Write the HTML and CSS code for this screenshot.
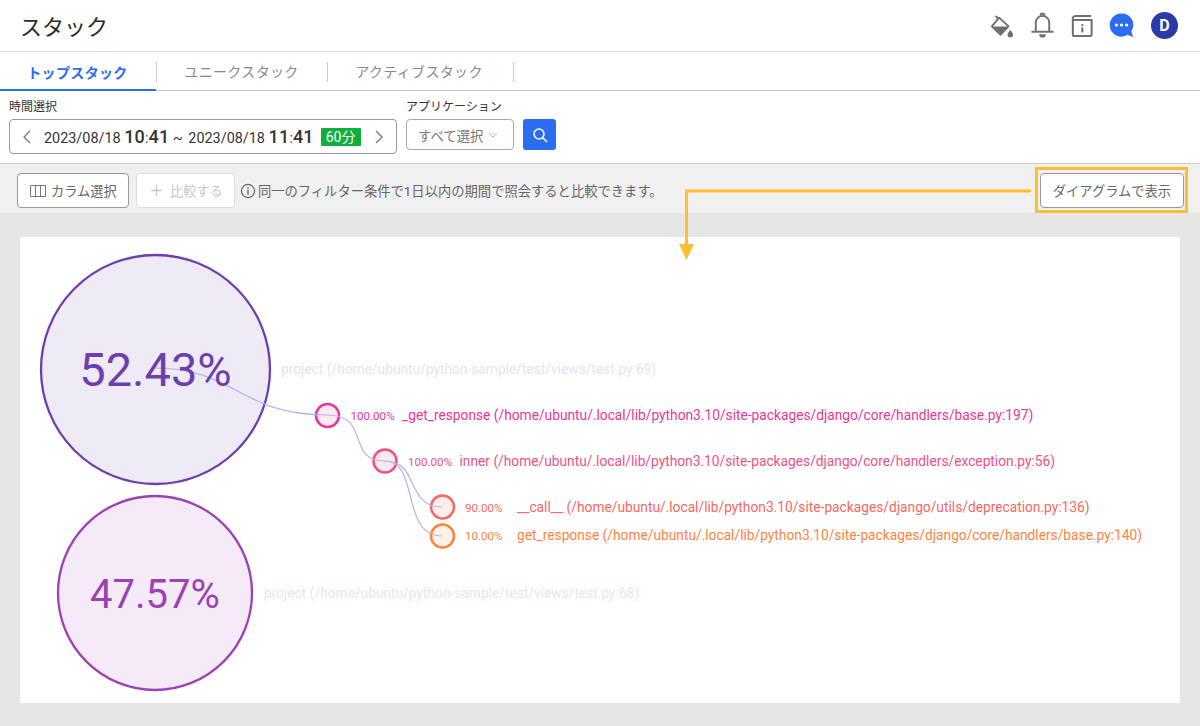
FILE: index.html
```html
<!DOCTYPE html>
<html lang="ja">
<head>
  <meta charset="UTF-8">
  <title>スタック</title>
  <link rel="stylesheet" href="styles.css">
</head>
<body>
  <header class="topbar">
    <h1>スタック</h1>
    <div class="top-icons">
      <svg width="24" height="25" viewBox="0 0 26 26">
        <path d="M6 2.5 L9.5 6" stroke="#6f6f6f" stroke-width="2" fill="none"/>
        <path d="M10 4.5 L20 14 L11.5 23 L2 14 Z" fill="none" stroke="#6f6f6f" stroke-width="2" stroke-linejoin="round"/>
        <path d="M3 14 H19.5 L11.5 22.5 Z" fill="#6f6f6f"/>
        <path d="M22 18 C24 20.5 25 21.5 25 23 A3 3 0 0 1 19 23 C19 21.5 20 20.5 22 18 Z" fill="#6f6f6f"/>
      </svg>
      <svg width="25" height="27" viewBox="0 0 26 28">
        <path d="M6 20 V11 A7 7 0 0 1 20 11 V20" fill="none" stroke="#6f6f6f" stroke-width="2"/>
        <path d="M1.5 20.5 H24.5" stroke="#6f6f6f" stroke-width="2"/>
        <path d="M11 3.5 A2 2 0 0 1 15 3.5" fill="none" stroke="#6f6f6f" stroke-width="2"/>
        <path d="M9.5 23 H16.5 A3.5 3.5 0 0 1 9.5 23 Z" fill="#6f6f6f"/>
      </svg>
      <svg width="22" height="24" viewBox="0 0 24 26">
        <path d="M2 6 A3 3 0 0 1 5 2 H22 M2 6 V22 A2 2 0 0 0 4 24 H21 A1.5 1.5 0 0 0 22.5 22.5 V6.5 H3" fill="none" stroke="#6f6f6f" stroke-width="2.2"/>
        <rect x="11.3" y="11" width="2.2" height="2.2" fill="#6f6f6f"/>
        <rect x="11.3" y="14.5" width="2.2" height="5.5" fill="#6f6f6f"/>
      </svg>
      <svg width="26" height="27" viewBox="0 0 28 28">
        <path d="M13 1 A12.5 12.5 0 1 0 20 24 L26 26.5 L24 20.5 A12.5 12.5 0 0 0 13 1 Z" fill="#2a6df0"/>
        <circle cx="8" cy="13.5" r="1.7" fill="#fff"/>
        <circle cx="13.5" cy="13.5" r="1.7" fill="#fff"/>
        <circle cx="19" cy="13.5" r="1.7" fill="#fff"/>
      </svg>
      <span class="avatar">D</span>
    </div>
  </header>

  <nav class="tabs">
    <a class="tab active">トップスタック</a>
    <a class="tab">ユニークスタック</a>
    <a class="tab">アクティブスタック</a>
  </nav>

  <section class="filters">
    <div class="field">
      <label>時間選択</label>
      <div class="time-box">
        <svg width="10" height="16" viewBox="0 0 10 16"><path d="M8 2 L2 8 L8 14" fill="none" stroke="#777" stroke-width="1.3"/></svg>
        <span class="time-text">2023/08/18 <b>10</b>:<b>41</b> <i>~</i> 2023/08/18 <b>11</b>:<b>41</b></span>
        <span class="range-badge">60分</span>
        <svg width="10" height="16" viewBox="0 0 10 16"><path d="M2 2 L8 8 L2 14" fill="none" stroke="#777" stroke-width="1.3"/></svg>
      </div>
    </div>
    <div class="field">
      <label>アプリケーション</label>
      <div class="select-box">すべて選択
        <svg width="10" height="6" viewBox="0 0 10 6"><path d="M1 1 L5 5 L9 1" fill="none" stroke="#bbb" stroke-width="1"/></svg>
      </div>
    </div>
    <button class="search-btn">
      <svg width="16" height="16" viewBox="0 0 16 16"><circle cx="7" cy="7" r="5" fill="none" stroke="#fff" stroke-width="1.6"/><path d="M10.7 10.7 L15 15" stroke="#fff" stroke-width="1.6"/></svg>
    </button>
  </section>

  <section class="toolbar">
    <button class="btn">
      <svg width="16" height="12" viewBox="0 0 16 12"><path d="M.5 .5 H15.5 V11.5 H.5 Z M5.5 .5 V11.5 M10.5 .5 V11.5" fill="none" stroke="#777"/></svg>
      カラム選択
    </button>
    <button class="btn disabled">
      <svg width="13" height="13" viewBox="0 0 13 13"><path d="M6.5 1 V12 M1 6.5 H12" stroke="#c8c8c8" stroke-width="1.3"/></svg>
      比較する
    </button>
    <svg class="info" width="16" height="16" viewBox="0 0 16 16"><circle cx="8" cy="8" r="6.6" fill="none" stroke="#666" stroke-width="1.2"/><rect x="7.3" y="6.8" width="1.4" height="5" fill="#666"/><rect x="7.3" y="4.2" width="1.4" height="1.5" fill="#666"/></svg>
    <span class="hint">同一のフィルター条件で1日以内の期間で照会すると比較できます。</span>
    <button class="btn diagram-btn">ダイアグラムで表示</button>
  </section>

  <main class="content">
    <div class="card">
      <svg class="flame" width="1160" height="466" viewBox="20 237 1160 466">
        <circle cx="155.500" cy="369.500" r="114.500" fill="#eeeaf6" stroke="#6d3fad" stroke-width="2.300"/>
        <circle cx="155" cy="593" r="97" fill="#f5eaf7" stroke="#9c42b4" stroke-width="2.300"/>
        <circle cx="327.500" cy="415.500" r="11.500" fill="#fdeaf3" stroke="#e8369a" stroke-width="2.500"/>
        <circle cx="385" cy="461" r="11.500" fill="#fdeaf0" stroke="#f24f85" stroke-width="2.500"/>
        <circle cx="442.500" cy="507" r="11.500" fill="#feeeec" stroke="#fb6660" stroke-width="2.500"/>
        <circle cx="442.500" cy="536" r="11.500" fill="#fff2e8" stroke="#fd8340" stroke-width="2.500"/>

        <g fill="none" stroke="#b6b2e6" stroke-width="1.200">
          <path d="M155 368 C235 368 240 415 327 415"/>
          <path d="M327 415 C372 415 345 461 385 461"/>
          <path d="M385 461 C420 461 405 507 442 507"/>
          <path d="M385 461 C420 461 400 536 442 536"/>
        </g>

        <text class="pct big" x="155.500" y="386" fill="#6d3fad">52.43%</text>
        <text class="pct mid" x="155" y="608" fill="#9c42b4">47.57%</text>

        <text class="label" x="281" y="374" fill="#e7e2f4">project (/home/ubuntu/python-sample/test/views/test.py:69)</text>
        <text class="label" x="264" y="598" fill="#efe1f3">project (/home/ubuntu/python-sample/test/views/test.py:68)</text>

        <text class="small" x="350.500" y="420" fill="#e8369a">100.00%</text>
        <text class="label" x="402" y="420" fill="#e8369a">_get_response (/home/ubuntu/.local/lib/python3.10/site-packages/django/core/handlers/base.py:197)</text>
        <text class="small" x="408" y="466" fill="#f24f85">100.00%</text>
        <text class="label" x="459.500" y="466" fill="#f24f85">inner (/home/ubuntu/.local/lib/python3.10/site-packages/django/core/handlers/exception.py:56)</text>
        <text class="small" x="465" y="512" fill="#fb6660">90.00%</text>
        <text class="label" x="517" y="512" fill="#fb6660">__call__ (/home/ubuntu/.local/lib/python3.10/site-packages/django/utils/deprecation.py:136)</text>
        <text class="small" x="465" y="540" fill="#fd8340">10.00%</text>
        <text class="label" x="517" y="540" fill="#fd8340">get_response (/home/ubuntu/.local/lib/python3.10/site-packages/django/core/handlers/base.py:140)</text>
      </svg>
    </div>
  </main>

  <!-- annotation over the screenshot -->
  <div class="callout-box"></div>
  <svg class="callout-arrow" width="360" height="80" viewBox="0 0 360 80">
    <path d="M352 11 H7.500 V66" fill="none" stroke="#fdbf2d" stroke-width="3"/>
    <path d="M0 64 H15 L7.500 80 Z" fill="#fdbf2d"/>
  </svg>
</body>
</html>
```

FILE: styles.css
```css
html {
  font-family: "Roboto", "Noto Sans CJK JP", sans-serif;
}

body {
  margin: 0;
  height: 726px;
  overflow: hidden;
  display: flex;
  flex-direction: column;
  background-color: #fff;
  color: #333;
  position: relative;
}

button {
  font-family: inherit;
}

.topbar {
  display: flex;
  align-items: center;
  justify-content: space-between;
  padding: 0 22px 0 20px;
  box-sizing: border-box;
  border-bottom: 1px solid #ddd;
  flex: none;
  height: 52px;
}

.topbar h1 {
  margin: 0 0 2px;
  font-size: 22px;
  font-weight: 400;
  color: #2b2b2b;
}

.top-icons {
  display: flex;
  align-items: center;
  gap: 16px;
}

.avatar {
  width: 27px;
  height: 27px;
  border-radius: 50%;
  background-color: #2a3aa8;
  color: #fff;
  font-size: 16px;
  font-weight: 700;
  display: flex;
  align-items: center;
  justify-content: center;
}

.tabs {
  display: flex;
  height: 39px;
  flex: none;
  box-sizing: border-box;
  border-bottom: 1px solid #ccc;
}

.tab {
  width: 157px;
  box-sizing: border-box;
  display: flex;
  align-items: center;
  justify-content: center;
  font-size: 14px;
  letter-spacing: .35px;
  color: #888;
  position: relative;
}

.tab:nth-child(2) {
  width: 171px;
  padding-right: 2px;
}

.tab:nth-child(3) {
  width: 186px;
  padding-right: 4px;
}

.tab::after {
  content: "";
  position: absolute;
  right: 0;
  top: 10px;
  height: 20px;
  width: 1px;
  background-color: #ccc;
}

.tab.active {
  color: #2a6df0;
  font-weight: 700;
  height: 39px;
  padding-right: 2px;
  background: linear-gradient(#2a6df0, #2a6df0) left bottom / 156px 2px no-repeat;
}

.filters {
  height: 73px;
  flex: none;
  box-sizing: border-box;
  display: flex;
  align-items: flex-end;
  gap: 9px;
  padding: 0 9px 9px;
  border-bottom: 1px solid #ccc;
}

.field label {
  display: block;
  font-size: 12px;
  color: #333;
  margin-bottom: 5px;
}

.time-box {
  width: 388px;
  height: 35px;
  box-sizing: border-box;
  border: 1px solid #999;
  border-radius: 4px;
  display: flex;
  align-items: center;
  padding: 0 12px;
}

.time-text {
  font-size: 14.4px;
  margin-left: 12px;
  color: #333;
  white-space: nowrap;
}

.time-text b {
  font-size: 18px;
  font-weight: 500;
  letter-spacing: .2px;
}

.time-text i {
  font-style: normal;
  margin-right: 2px;
}

.range-badge {
  background-color: #0cb03d;
  color: #fff;
  font-size: 14px;
  padding: 0 5px;
  height: 18px;
  line-height: 18px;
  border-radius: 1px;
  margin: 0 auto 0 7px;
}

.select-box {
  width: 108px;
  height: 31px;
  box-sizing: border-box;
  border: 1px solid #aaa;
  border-radius: 4px;
  display: flex;
  align-items: center;
  gap: 5px;
  padding-left: 11px;
  font-size: 13.4px;
  color: #777;
  margin-bottom: 4px;
}

.search-btn {
  width: 33px;
  height: 31px;
  margin-bottom: 4px;
  border: 0;
  border-radius: 3px;
  background-color: #2a6df0;
  display: flex;
  align-items: center;
  justify-content: center;
  padding: 0;
}

.toolbar {
  height: 49px;
  flex: none;
  box-sizing: border-box;
  display: flex;
  align-items: center;
  padding: 4px 16px 0 17px;
  background-color: #f0f0f0;
}

.btn {
  height: 35px;
  box-sizing: border-box;
  border: 1px solid #999;
  border-radius: 4px;
  background-color: #fff;
  color: #666;
  font-size: 13.25px;
  display: flex;
  align-items: center;
  gap: 5px;
  padding: 0 11px 0 12px;
  white-space: nowrap;
}

.btn.disabled {
  margin-left: 7px;
  border-color: #ddd;
  color: #c8c8c8;
  gap: 7px;
  padding: 0 11px 0 13px;
}

.info {
  margin-left: 5px;
}

.hint {
  font-size: 13.3px;
  color: #666;
  margin-left: 2px;
  white-space: nowrap;
}

.diagram-btn {
  margin-left: auto;
  padding: 0 12px;
}

.content {
  flex: 1;
  background-color: #e6e6e6;
  padding: 24px 20px 23px;
  display: flex;
}

.card {
  flex: 1;
  background-color: #fff;
}

.flame {
  display: block;
}

.flame text {
  font-family: "Roboto", sans-serif;
}

.pct {
  text-anchor: middle;
}

.big {
  font-size: 47px;
}

.mid {
  font-size: 40px;
}

.label {
  font-size: 13.76px;
}

.small {
  font-size: 11.6px;
}

.callout-box {
  position: absolute;
  left: 1035px;
  top: 167px;
  width: 147px;
  height: 40px;
  border: 3px solid #fdbf2d;
}

.callout-arrow {
  position: absolute;
  left: 679px;
  top: 180px;
}
```
